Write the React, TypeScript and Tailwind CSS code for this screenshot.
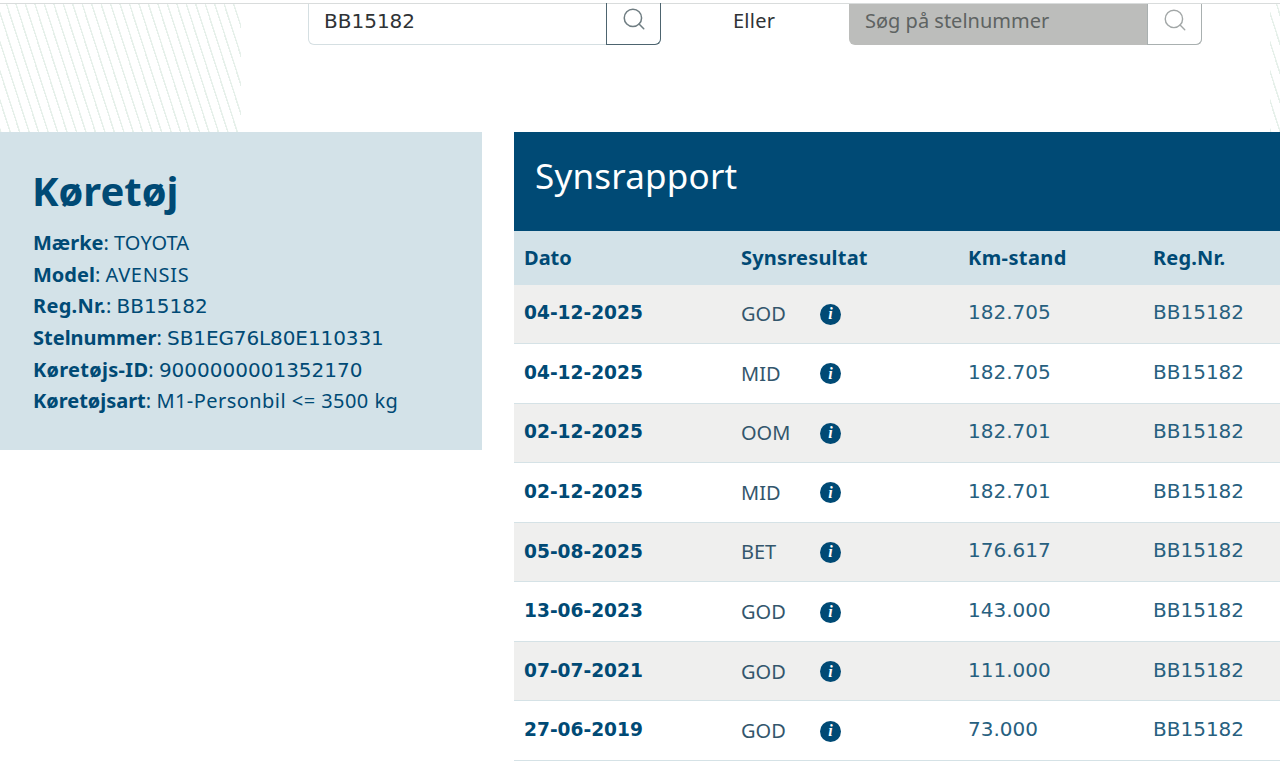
import { Search } from 'lucide-react'

const ROWS = [
  { dato: '04-12-2025', res: 'GOD', km: '182.705' },
  { dato: '04-12-2025', res: 'MID', km: '182.705' },
  { dato: '02-12-2025', res: 'OOM', km: '182.701' },
  { dato: '02-12-2025', res: 'MID', km: '182.701' },
  { dato: '05-08-2025', res: 'BET', km: '176.617' },
  { dato: '13-06-2023', res: 'GOD', km: '143.000' },
  { dato: '07-07-2021', res: 'GOD', km: '111.000' },
  { dato: '27-06-2019', res: 'GOD', km: '73.000' },
]

const NUM = "font-['DejaVu_Sans',sans-serif]"

const INFO = [
  { k: 'Mærke', kc: '', v: 'TOYOTA', vc: 'tracking-[0.1px]' },
  { k: 'Model', kc: '', v: 'AVENSIS', vc: 'tracking-[0.7px]' },
  { k: 'Reg.Nr.', kc: 'tracking-[0.3px]', v: 'BB15182', vc: NUM },
  { k: 'Stelnummer', kc: '', v: 'SB1EG76L80E110331', vc: `${NUM} tracking-[-0.1px]` },
  { k: 'Køretøjs-ID', kc: 'tracking-[0.3px]', v: '9000000001352170', vc: NUM },
  { k: 'Køretøjsart', kc: '', v: 'M1-Personbil <= 3500 kg', vc: 'tracking-[0.45px]' },
]

const hatch =
  'bg-[repeating-linear-gradient(72deg,#e6f0ea_0px,#e6f0ea_1.2px,#ffffff_1.7px,#ffffff_9px)]'

export default function App() {
  return (
    <div className="h-[780px] w-[1280px] overflow-hidden bg-white font-['Noto_Sans',sans-serif] text-[#004a75]">
      <div className="relative mt-[3px] h-[129px] border-t border-[#d9dcdc]">
        <div className={`absolute left-0 top-0 h-full w-[241px] ${hatch}`} />
        <div className={`absolute right-0 top-0 h-full w-[10px] ${hatch}`} />

        <div className="relative flex items-start pl-[308px]">
          <div className="flex h-[41px] w-[353px] rounded-b-[6px] border border-t-0 border-[#d5dfe2] bg-white">
            <div className="flex-1 pl-[15px] pt-[3px] font-['DejaVu_Sans',sans-serif] text-[20px] leading-[28px] text-[#2f3336]">BB15182</div>
            <div className="-my-px -mr-px flex w-[55px] shrink-0 justify-center rounded-br-[6px] border-b border-l border-r border-[#4d646f] pt-[3px]">
              <Search size={26} strokeWidth={1.4} className="text-[#6f7d82]" />
            </div>
          </div>
          <div className="w-[188px] pl-[72px] pt-[3px] text-[20px] leading-[28px] tracking-[0.25px] text-[#2f3336]">Eller</div>
          <div className="flex h-[41px] w-[353px] rounded-b-[6px] bg-[#bcbdbb]">
            <div className="flex-1 pl-[16px] pt-[3px] text-[20px] leading-[28px] text-[#5e6362]">Søg på stelnummer</div>
            <div className="flex w-[55px] shrink-0 justify-center rounded-br-[6px] border-b border-l border-r border-[#a9b0b0] bg-white pt-[3px]">
              <Search size={26} strokeWidth={1.3} className="text-[#a2a7a7]" />
            </div>
          </div>
        </div>
      </div>

      <div className="flex items-start gap-[32px]">
        <div className="h-[318px] w-[482px] shrink-0 bg-[#d3e2e8] pl-[33px] pt-[33px]">
          <h1 className="-ml-px text-[40px] font-bold leading-[52px]">Køretøj</h1>
          <div className="mt-[11px] text-[20px] leading-[30px]">
            {INFO.map(i => (
              <div key={i.k} className="h-[31.7px]">
                <span className={`font-bold ${i.kc}`}>{i.k}</span>: <span className={i.vc}>{i.v}</span>
              </div>
            ))}
          </div>
        </div>

        <div className="flex-1">
          <div className="flex h-[99px] items-center bg-[#004a75] pb-[10px] pl-[21px] text-[35px] tracking-[0.2px] text-white">Synsrapport</div>
          <div className="flex h-[53.5px] items-center bg-[#d3e2e8] pl-[10px] text-[20px] font-bold">
            <div className="w-[217px]">Dato</div>
            <div className="w-[227px] tracking-[0.2px]">Synsresultat</div>
            <div className="w-[185px] tracking-[0.4px]">Km-stand</div>
            <div className="tracking-[0.2px]">Reg.Nr.</div>
          </div>
          {ROWS.map((r, i) => (
            <div
              key={i}
              className={`flex h-[59.55px] items-center border-b border-[#d5e2e6] pb-[3px] pl-[10px] text-[20px] ${i % 2 === 0 ? 'bg-[#efefee]' : 'bg-white'}`}
            >
              <div className="w-[217px] pt-[2px] font-['DejaVu_Sans',sans-serif] text-[18.6px] font-bold">{r.dato}</div>
              <div className="flex w-[227px] items-center pt-[4px]">
                <span className="w-[79px] text-[#33566c]">{r.res}</span>
                <span className="flex size-[21px] items-center justify-center rounded-full bg-[#004a75] font-['Liberation_Serif',serif] text-[16px] font-bold italic leading-none text-white">i</span>
              </div>
              <div className="w-[185px] font-['DejaVu_Sans',sans-serif] text-[#27607f]">{r.km}</div>
              <div className="font-['DejaVu_Sans',sans-serif] text-[#27607f]">BB15182</div>
            </div>
          ))}
        </div>
      </div>
    </div>
  )
}
